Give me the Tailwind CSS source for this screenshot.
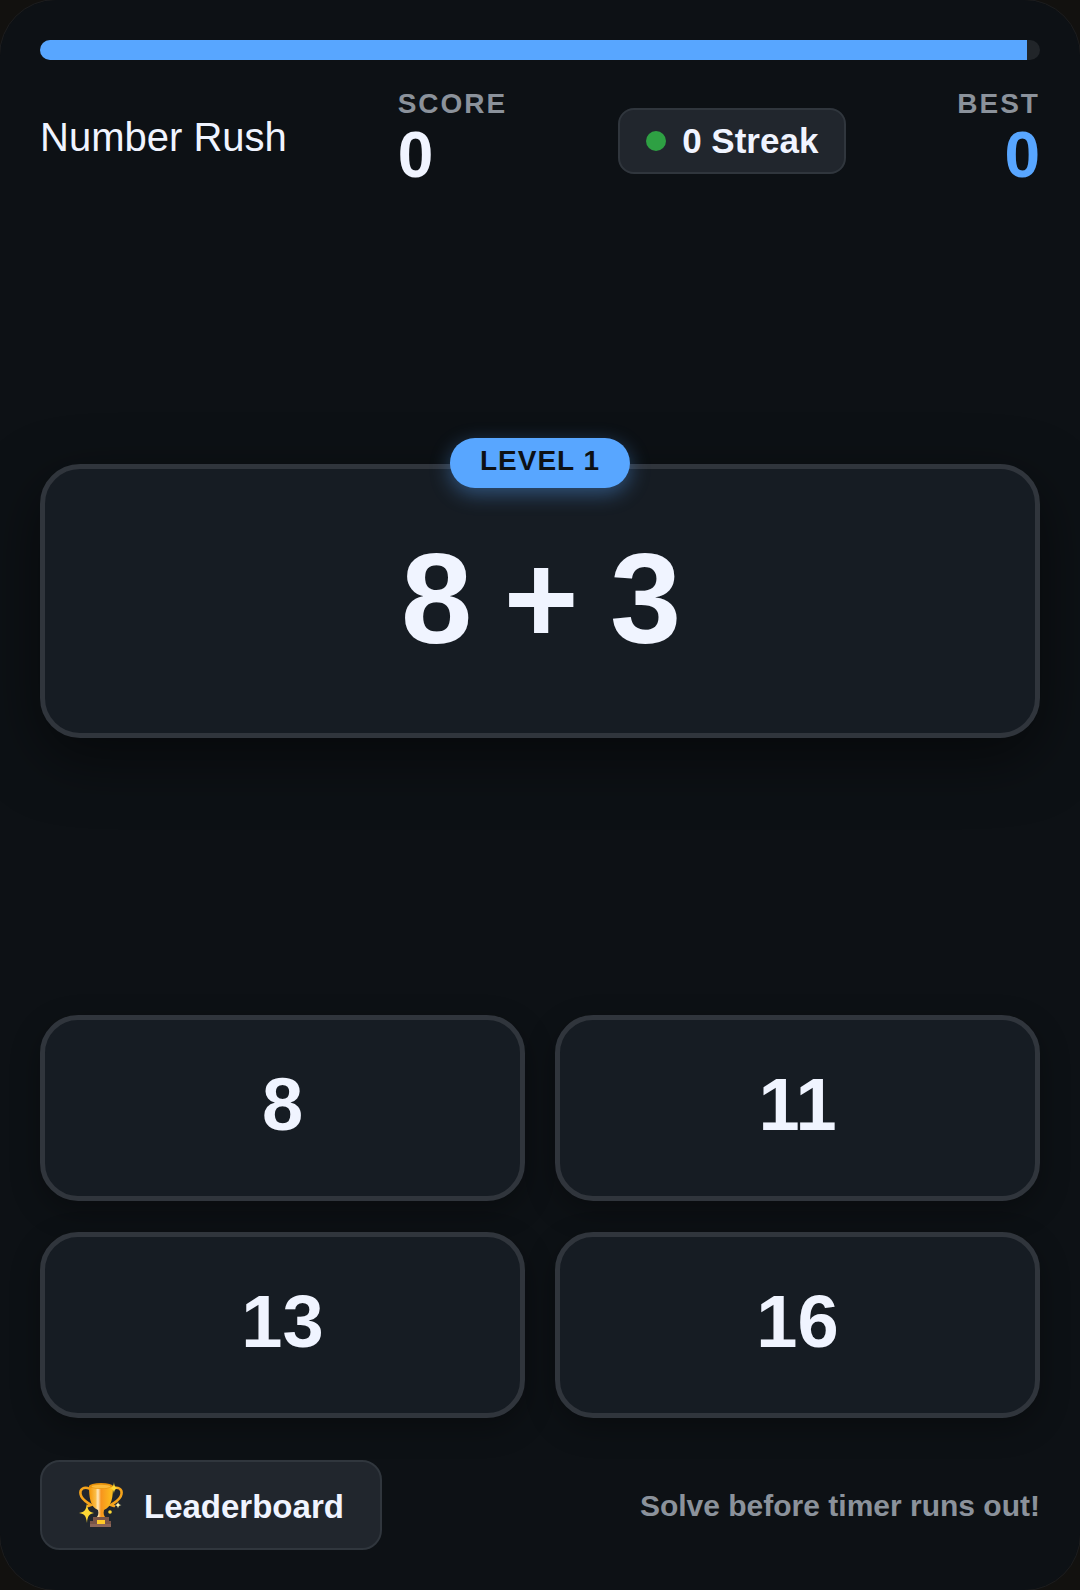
<!DOCTYPE html>
<html lang="en">
<head>
  <meta charset="UTF-8" />
  <meta name="viewport" content="width=device-width, initial-scale=1.0" />
  <title>Number Rush</title>
  <script src="https://cdn.jsdelivr.net/npm/@tailwindcss/browser@4"></script>
</head>
<body class="bg-[#12110f] font-['Liberation_Sans',Arial,sans-serif] text-[#f0f4ff] overflow-x-hidden">
  <div class="min-h-screen flex flex-col p-10 bg-[#0d1115] outline outline-[#1c1d1f] rounded-[56px]">

    <!-- Timer -->
    <div class="h-5 rounded-full bg-[#212529] overflow-hidden">
      <div id="timerBar" class="h-full bg-[#58a6ff]" style="width: 98.7%"></div>
    </div>

    <!-- Stats -->
    <header class="mt-7 flex items-center justify-between">
      <h1 class="text-[40px] leading-12 pb-2">Number Rush</h1>
      <div class="pb-1">
        <div class="text-[28px] leading-8 font-bold tracking-[2px] text-[#8b929b]">SCORE</div>
        <div id="score" class="text-[64px] leading-[70px] font-bold">0</div>
      </div>
      <div class="flex items-center gap-4 px-[26px] h-[66px] rounded-2xl border-2 border-[#30363d] bg-[#21262d] text-[35px] font-bold">
        <span class="size-5 rounded-full bg-[#2ea043]"></span>
        <span><span id="streak">0</span> Streak</span>
      </div>
      <div class="pb-1 text-right">
        <div class="text-[28px] leading-8 font-bold tracking-[2px] text-[#8b929b]">BEST</div>
        <div id="best" class="text-[64px] leading-[70px] font-bold text-[#58a6ff]">0</div>
      </div>
    </header>

    <!-- Question -->
    <main class="flex-1 flex items-center pt-10 pb-12">
      <div class="relative w-full pt-[62px] pb-[66px] rounded-[40px] border-5 border-[#30353c] bg-[#161c23] text-center shadow-[0_20px_60px_rgba(0,0,0,0.5)]">
        <div id="level" class="absolute -top-[31px] left-1/2 -translate-x-1/2 px-[30px] pt-1 pb-2 rounded-full bg-[#58a6ff] text-[28px] leading-[38px] font-bold tracking-[1px] text-[#0d1115] whitespace-nowrap shadow-[0_6px_20px_rgba(88,166,255,0.4)]">LEVEL 1</div>
        <div id="question" class="text-[128px] leading-[136px] font-bold tracking-[-2px]">8 + 3</div>
      </div>
    </main>

    <!-- Answers -->
    <div id="answers" class="grid grid-cols-2 gap-x-[30px] gap-y-[31px] text-[74px] leading-20 font-bold">
      <button class="pt-[45px] pb-[51px] rounded-[38px] border-5 border-[#30353c] bg-[#161c23] shadow-[0_10px_30px_rgba(0,0,0,0.3)]">8</button>
      <button class="pt-[45px] pb-[51px] rounded-[38px] border-5 border-[#30353c] bg-[#161c23] shadow-[0_10px_30px_rgba(0,0,0,0.3)]">11</button>
      <button class="pt-[45px] pb-[51px] rounded-[38px] border-5 border-[#30353c] bg-[#161c23] shadow-[0_10px_30px_rgba(0,0,0,0.3)]">13</button>
      <button class="pt-[45px] pb-[51px] rounded-[38px] border-5 border-[#30353c] bg-[#161c23] shadow-[0_10px_30px_rgba(0,0,0,0.3)]">16</button>
    </div>

    <!-- Footer -->
    <footer class="mt-[42px] flex items-center justify-between">
      <button class="flex items-center gap-5 h-[90px] px-9 rounded-[20px] border-2 border-[#30363d] bg-[#21262d] text-[33px] font-bold">
        <svg class="size-[46px]" viewBox="0 0 46 46" fill="none">
          <defs>
            <linearGradient id="gold" x1="12" y1="0" x2="34" y2="0" gradientUnits="userSpaceOnUse">
              <stop offset="0" stop-color="#f59a0c" />
              <stop offset=".25" stop-color="#fbbc45" />
              <stop offset=".36" stop-color="#ffe9bd" />
              <stop offset=".5" stop-color="#f7941d" />
              <stop offset="1" stop-color="#fdbd1d" />
            </linearGradient>
          </defs>
          <path d="M12 7C6 4 1.500 7 2.500 12C3.500 18 9 20 13 23L10 24M34 7C40 4 44.500 7 43.500 12C42.500 18 37 20 33 23L36 24" stroke="#f5a31b" stroke-width="2.500" stroke-linecap="round" />
          <path d="M11 4C11 14 12 25 20 28C21 32 20 34 18 36H28C26 34 25 32 26 28C34 25 35 14 35 4Z" fill="url(#gold)" />
          <ellipse cx="23" cy="4" rx="12" ry="3" fill="#e8920c" />
          <ellipse cx="23" cy="4.500" rx="9.500" ry="1.800" fill="#fbb93a" />
          <path d="M15 35H31V39H33V45H12V39H15Z" fill="#7a5548" />
          <path d="M12 42H33V45H12Z" fill="#8d6658" />
          <rect x="19" y="38" width="8" height="4" fill="#ffc928" />
          <path d="M9 21C9.500 28 11 30 16 31C11 32 9.500 34 9 41C8 34 7 32 1 31C7 30 8 28 9 21Z" fill="#fdd835" />
          <path d="M36 0C36.300 4 37 5.500 41 6C37 6.500 36.300 8 36 12C35.500 8 35 6.500 31 6C35 5.500 35.500 4 36 0Z" fill="#fdd835" />
          <path d="M40 20C40.500 22 41 22.600 43.500 23C41 23.500 40.500 24 40 26.500C39.500 24 39 23.500 36.500 23C39 22.600 39.500 22 40 20Z" fill="#fff3a8" />
          <circle cx="32" cy="30" r="1.800" fill="#fdd835" />
        </svg>
        <span class="pt-1">Leaderboard</span>
      </button>
      <p class="text-[30px] font-bold text-[#8b929b]">Solve before timer runs out!</p>
    </footer>
  </div>
</body>
</html>
